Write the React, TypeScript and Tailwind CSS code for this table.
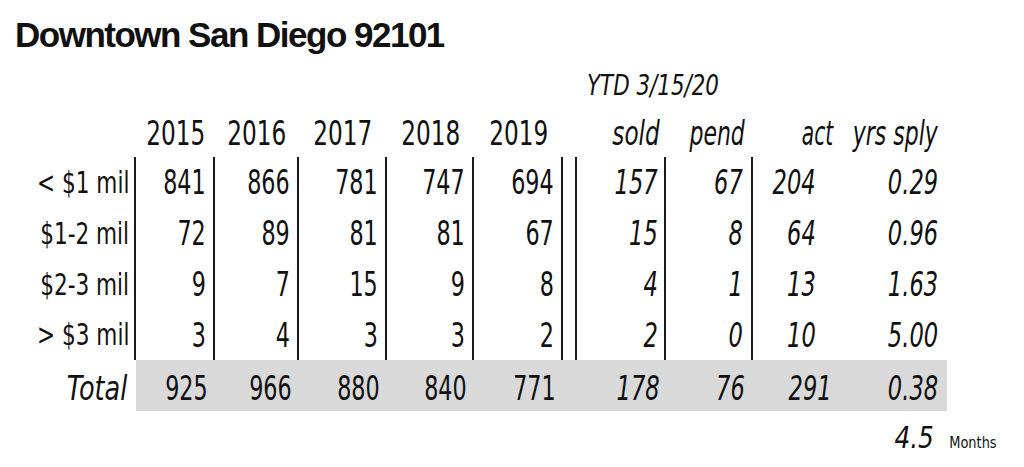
import type React from 'react';

const COLS =
  'grid grid-cols-[136px_79px_84px_88px_87px_89px_14px_89px_87px_87px_107px]';

const rows = [
  { label: '< $1 mil', years: [841, 866, 781, 747, 694], sold: 157, pend: 67, act: 204, sply: '0.29' },
  { label: '$1-2 mil', years: [72, 89, 81, 81, 67], sold: 15, pend: 8, act: 64, sply: '0.96' },
  { label: '$2-3 mil', years: [9, 7, 15, 9, 8], sold: 4, pend: 1, act: 13, sply: '1.63' },
  { label: '> $3 mil', years: [3, 4, 3, 3, 2], sold: 2, pend: 0, act: 10, sply: '5.00' },
];

const years = ['2015', '2016', '2017', '2018', '2019'];
const totals = [925, 966, 880, 840, 771];

// narrow the condensed face a bit more, anchored on the aligned side
function Narrow({ children, className }: { children: React.ReactNode; className: string }) {
  return <span className={`inline-block whitespace-nowrap ${className}`}>{children}</span>;
}

export default function App() {
  return (
    <div className="h-[467px] w-[1024px] overflow-hidden bg-white font-['DejaVu_Sans_Condensed','Liberation_Sans',sans-serif] text-[33px] text-[#111]">
      {/* title */}
      <div className="h-[62px] pl-[15px] pt-[17px] font-['Liberation_Sans',sans-serif] text-[35px] font-bold leading-[36px] tracking-[-1.5px]">
        Downtown San Diego 92101
      </div>

      {/* ytd */}
      <div className={`${COLS} h-[48px] items-center`}>
        <div className="col-span-4 col-start-8 pl-[10px] text-[28px] italic leading-none">
          <Narrow className="origin-left scale-x-[0.85]">YTD 3/15/20</Narrow>
        </div>
      </div>

      {/* header */}
      <div className={`${COLS} h-[47px] items-center leading-none`}>
        <div />
        {years.map((y) => (
          <div key={y} className="flex justify-center">
            <Narrow className="origin-center scale-x-[0.78]">{y}</Narrow>
          </div>
        ))}
        <div />
        <div className="flex justify-end pr-[6px] italic">
          <Narrow className="origin-right scale-x-[0.78]">sold</Narrow>
        </div>
        <div className="flex justify-end pr-[8px] italic">
          <Narrow className="origin-right scale-x-[0.74]">pend</Narrow>
        </div>
        <div className="flex justify-end pr-[7px] italic">
          <Narrow className="origin-right scale-x-[0.68]">act</Narrow>
        </div>
        <div className="flex justify-end pr-[9px] italic">
          <Narrow className="origin-right scale-x-[0.74]">yrs sply</Narrow>
        </div>
      </div>

      {/* data rows */}
      {rows.map((r, i) => (
        <div
          key={r.label}
          className={`${COLS} leading-none ${i === 3 ? 'h-[50px]' : 'h-[51px]'}`}
        >
          <div className="flex h-full items-center justify-end border-r-2 border-[#1a1a1a] pr-[5px] text-[30px]">
            <Narrow className="origin-right scale-x-[0.8]">{r.label}</Narrow>
          </div>
          {r.years.map((v, j) => (
            <div
              key={j}
              className="flex h-full items-center justify-end border-r-2 border-[#1a1a1a] pr-[7px]"
            >
              <Narrow className="origin-right scale-x-[0.75]">{v}</Narrow>
            </div>
          ))}
          <div className="h-full border-r-2 border-[#1a1a1a]" />
          <div className="flex h-full items-center justify-end border-r-2 border-[#1a1a1a] pr-[6px] italic">
            <Narrow className="origin-right scale-x-[0.76]">{r.sold}</Narrow>
          </div>
          <div className="flex h-full items-center justify-end border-r-2 border-[#1a1a1a] pr-[8px] italic">
            <Narrow className="origin-right scale-x-[0.76]">{r.pend}</Narrow>
          </div>
          <div className="flex h-full items-center justify-end pr-[24px] italic">
            <Narrow className="origin-right scale-x-[0.76]">{r.act}</Narrow>
          </div>
          <div className="flex h-full items-center justify-end pr-[9px] italic">
            <Narrow className="origin-right scale-x-[0.76]">{r.sply}</Narrow>
          </div>
        </div>
      ))}

      {/* total */}
      <div className={`${COLS} h-[51px] leading-none`}>
        <div className="flex h-full items-center justify-end pr-[9px] pt-[6px] italic">
          <Narrow className="origin-right scale-x-[0.86]">Total</Narrow>
        </div>
        {totals.map((v, j) => (
          <div
            key={j}
            className="flex h-full items-center justify-end bg-[#d9d9d9] pr-[7px] pt-[6px]"
          >
            <Narrow className="origin-right scale-x-[0.75]">{v}</Narrow>
          </div>
        ))}
        <div className="h-full bg-[#d9d9d9]" />
        <div className="flex h-full items-center justify-end bg-[#d9d9d9] pr-[6px] pt-[6px] italic">
          <Narrow className="origin-right scale-x-[0.76]">178</Narrow>
        </div>
        <div className="flex h-full items-center justify-end bg-[#d9d9d9] pr-[8px] pt-[6px] italic">
          <Narrow className="origin-right scale-x-[0.76]">76</Narrow>
        </div>
        <div className="flex h-full items-center justify-end bg-[#d9d9d9] pr-[8px] pt-[6px] italic">
          <Narrow className="origin-right scale-x-[0.76]">291</Narrow>
        </div>
        <div className="flex h-full items-center justify-end bg-[#d9d9d9] pr-[9px] pt-[6px] italic">
          <Narrow className="origin-right scale-x-[0.76]">0.38</Narrow>
        </div>
      </div>

      {/* months of supply */}
      <div className="flex items-baseline justify-end gap-[10px] pr-[27px] pt-[12px] leading-none">
        <span className="text-[30px] italic">
          <Narrow className="origin-right scale-x-[0.92]">4.5</Narrow>
        </span>
        <span className="text-[16px]">
          <Narrow className="origin-right scale-x-[0.9]">Months</Narrow>
        </span>
      </div>
    </div>
  );
}
